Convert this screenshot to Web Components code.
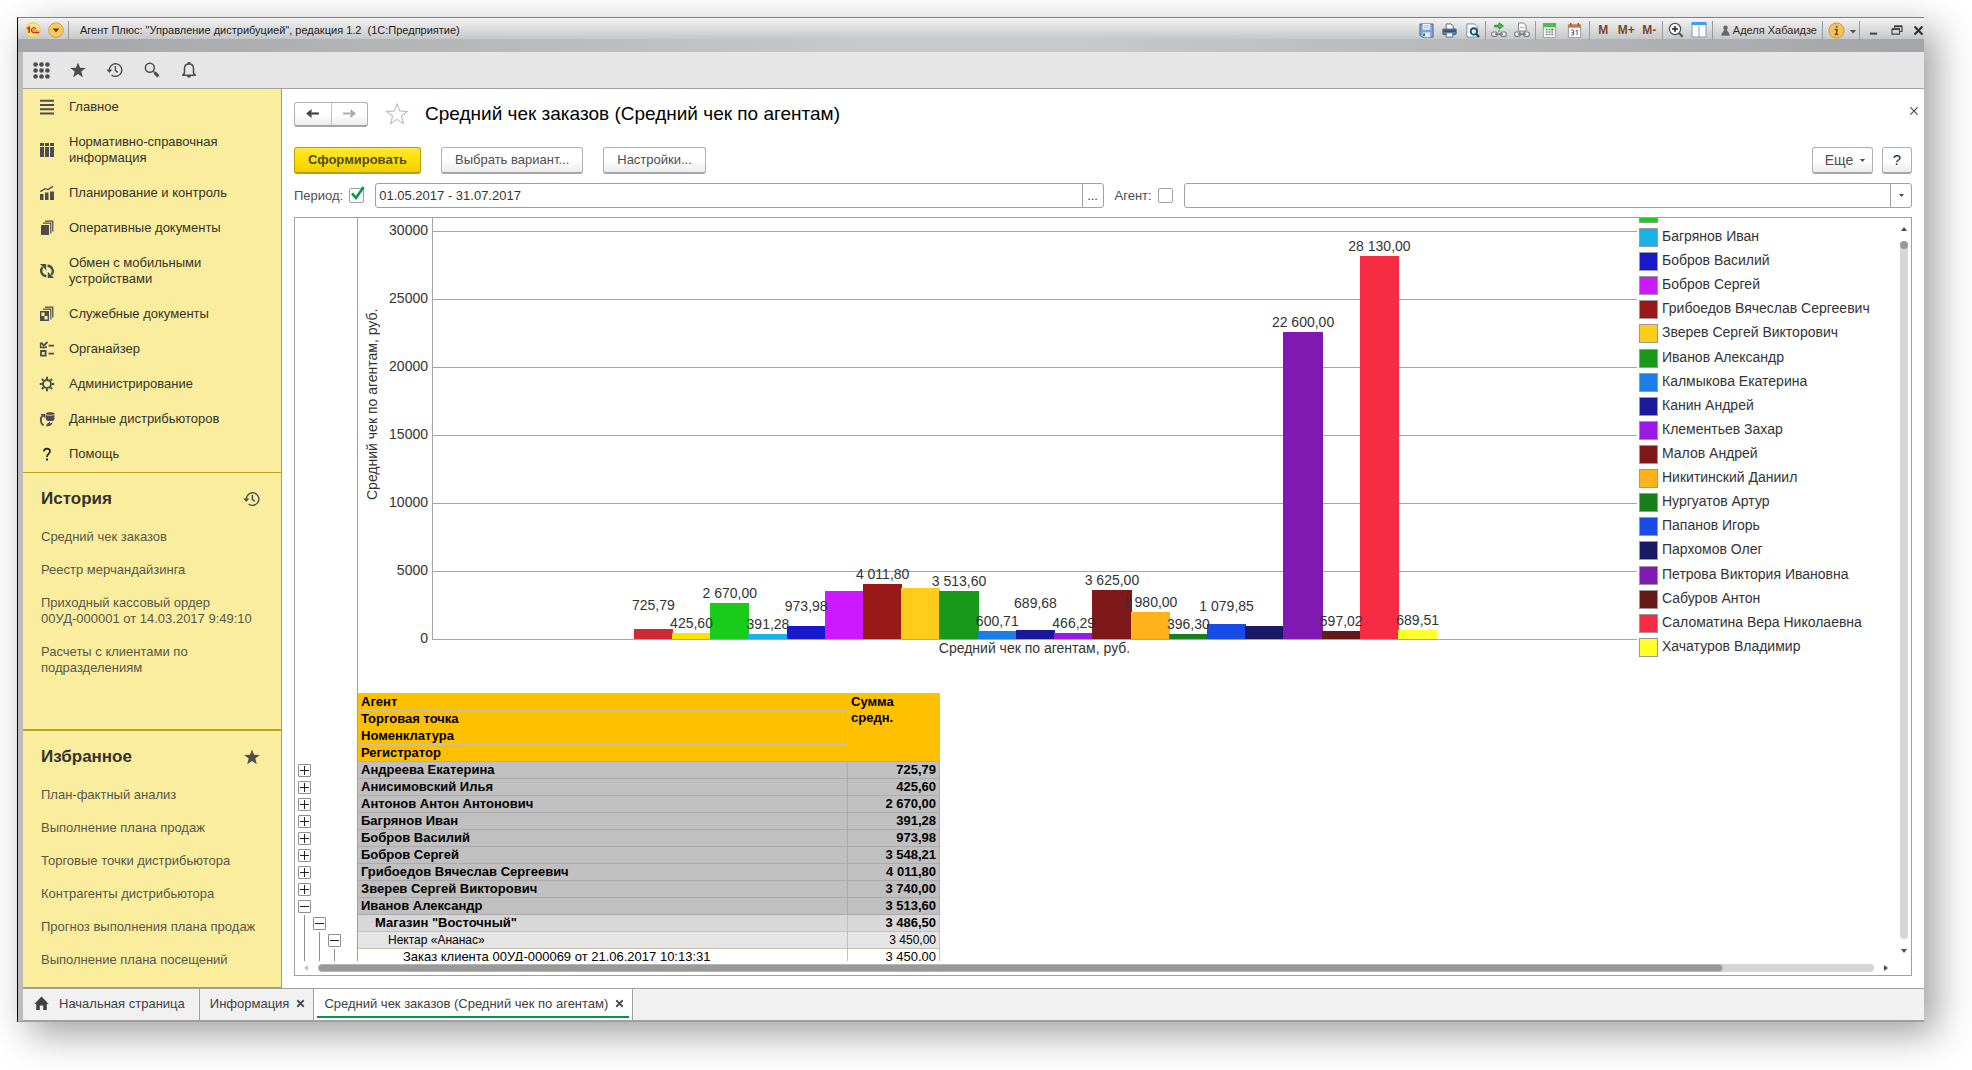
<!DOCTYPE html>
<html lang="ru">
<head>
<meta charset="utf-8">
<title>Агент Плюс: Управление дистрибуцией</title>
<style>
  html, body { height: 100%; margin: 0; }
  body {
    box-sizing: border-box;
    display: flex;
    padding: 17px 48px 48px 17px;
    background: #fff;
    color: #333;
    font: 13px/16px "Liberation Sans", Arial, sans-serif;
    overflow: hidden;
  }
</style>
</head>
<body>
<app-window>
  <title-bar slot="title"></title-bar>
  <tool-strip slot="tools"></tool-strip>
  <side-panel slot="side"></side-panel>
  <report-form slot="main"></report-form>
  <tab-strip slot="tabs"></tab-strip>
</app-window>

<script>
const BASE = `
  :host, *, *::before, *::after { box-sizing: border-box; }
  button, input, select { font: inherit; color: inherit; margin: 0; }
  button { cursor: default; }
  svg { display: block; flex: none; }
`;

function define(name, render, setup) {
  customElements.define(name, class extends HTMLElement {
    constructor() {
      super();
      this.attachShadow({ mode: 'open' });
    }
    connectedCallback() {
      const t = document.createElement('template');
      t.innerHTML = render(this);
      this.shadowRoot.replaceChildren(t.content.cloneNode(true));
      if (setup) setup(this);
    }
  });
}

/* ---------- icons ---------- */
const STAR = 'M10 1.6 12.3 7.4 18.6 7.8 13.7 11.8 15.3 18 10 14.5 4.7 18 6.3 11.8 1.4 7.8 7.7 7.4Z';
const HISTORY = `<g fill="none" stroke="currentColor" stroke-width="1.6"><path d="M3.6 10.2A7 7 0 1 1 6.2 15.5"/><path d="M10.4 5.6V10.4L13 12.6"/></g><path d="M.4 9.4H7L3.7 13.2Z" fill="currentColor"/>`;
const CHAIN = `<rect x=".8" y="10" width="5.4" height="4.4" rx="1.4" fill="#f4f4f4" stroke="#757a80" stroke-width="1.2"/><rect x="9.8" y="10" width="5.4" height="4.4" rx="1.4" fill="#f4f4f4" stroke="#757a80" stroke-width="1.2"/><path d="M4 12.2H12" stroke="#757a80" stroke-width="1.6"/>`;
const ICONS = {
  grid: ['0 0 20 20', [3, 10, 17].map(y => [3, 10, 17].map(x => `<circle cx="${x}" cy="${y}" r="2.7" fill="currentColor"/>`).join('')).join('')],
  star: ['0 0 20 20', `<path fill="currentColor" d="${STAR}"/>`],
  starline: ['0 0 20 20', `<path fill="#fff" stroke="#b4bac0" stroke-width=".9" d="${STAR}"/>`],
  history: ['0 0 20 20', HISTORY],
  search: ['0 0 20 20', `<circle cx="7.6" cy="7.4" r="5" fill="none" stroke="currentColor" stroke-width="1.7"/><path d="M11.4 11.4 13 13" stroke="currentColor" stroke-width="1.5"/><path d="M13 13 17 17" stroke="currentColor" stroke-width="3.6"/>`],
  bell: ['0 0 20 20', `<path d="M3 15.8H17L15 13.4V8.4C15 5 13 3.4 10 3.4S5 5 5 8.4V13.4Z" fill="none" stroke="currentColor" stroke-width="1.7" stroke-linejoin="round"/><path d="M8.6 3.2V1H11.4V3.2ZM7.8 16.6H12.2A2.2 2 0 0 1 7.8 16.6Z" fill="currentColor"/>`],
  menu: ['0 0 16 16', `<path d="M1 1.8H15M1 6H15M1 10.2H15M1 14.4H15" stroke="currentColor" stroke-width="2"/>`],
  table: ['0 0 16 16', `<path fill="currentColor" d="M1 1H5V4H1ZM6 1H10V4H6ZM11 1H15V4H11ZM1 5H5V15H1ZM6 5H10V15H6ZM11 5H15V15H11Z"/>`],
  plan: ['0 0 16 16', `<path fill="currentColor" d="M1 9H4.5V15H1ZM6 7.6H9.5V15H6ZM11 6.4H15V15H11Z"/><path d="M1.4 6.6 6 3.6 9 4.6 14 1.4" fill="none" stroke="currentColor" stroke-width="1.3"/>`],
  docs: ['0 0 16 16', `<path fill="currentColor" d="M2 5H10V15H2Z"/><path d="M4 3.2H11.8V13.4M6 1.2H13.8V11.4" fill="none" stroke="currentColor" stroke-width="1.2"/>`],
  sync: ['0 0 16 16', `<path d="M7.4 13.2A5.4 5.4 0 0 1 3.6 4.2M8.6 2.8A5.4 5.4 0 0 1 12.4 11.8" fill="none" stroke="currentColor" stroke-width="2.4"/><path fill="currentColor" d="M1 1H7.2V7.2ZM15 15H8.8V8.8Z"/>`],
  service: ['0 0 16 16', `<path d="M1.7 5.7H9.3V14.3H1.7Z" fill="none" stroke="currentColor" stroke-width="1.4"/><path fill="currentColor" d="M5.5 6H9V10H5.5ZM2 10H5.5V14H2Z"/><path d="M4 3.2H11.8V13.4M6 1.2H13.8V11.4" fill="none" stroke="currentColor" stroke-width="1.2"/>`],
  organizer: ['0 0 16 16', `<path d="M2 10H6.6V14.6H2Z" fill="none" stroke="currentColor" stroke-width="1.8"/><path d="M1.6 1.4V6.6H7V5" fill="none" stroke="currentColor" stroke-width="1.5"/><path d="M2.4 1.6 4.8 4.6 8.4 1" fill="none" stroke="currentColor" stroke-width="1.8"/><path d="M9.6 4.6H15M9.6 12.6H15" stroke="currentColor" stroke-width="1.9"/>`],
  gear: ['0 0 16 16', `<circle cx="8" cy="8" r="4" fill="none" stroke="currentColor" stroke-width="1.9"/><path d="M8 .8V3.2M8 12.8V15.2M.8 8H3.2M12.8 8H15.2M2.9 2.9 4.6 4.6M11.4 11.4 13.1 13.1M2.9 13.1 4.6 11.4M11.4 4.6 13.1 2.9" stroke="currentColor" stroke-width="2"/>`],
  data: ['0 0 16 16', `<path fill="currentColor" d="M7 2.6C7 .8 15.4.8 15.4 2.6V8.4C15.4 10.4 7 10.4 7 8.4Z"/><path d="M7 3.6C8.4 4.6 14 4.6 15.4 3.6" stroke="#fbed9e" stroke-width=".8" fill="none"/><path d="M4.6 14.4A6.6 6.6 0 0 1 3.4 4.6" fill="none" stroke="currentColor" stroke-width="1.8"/><path fill="currentColor" d="M1.4 3H6.4V7.4ZM7.4 13.4 11 10.4V12.6C12 12.4 13 11.6 13.2 10.8 13.6 13.4 12.4 15 7.4 15.4Z"/>`],
  help: ['0 0 16 16', `<path d="M5 5.4C5 1.8 11 1.8 11 5.2 11 7.6 8 7.8 8 11" fill="none" stroke="#222" stroke-width="1.7"/><path d="M7 12.4H9V14.4H7Z" fill="#222"/>`],
  home: ['0 0 16 16', `<path fill="currentColor" d="M8 .6 15.6 8.6H13.6V15H9.8V10H6.2V15H2.4V8.6H.4Z"/>`],
  close: ['0 0 10 10', `<path d="M1.4 1.4 8.6 8.6M8.6 1.4 1.4 8.6" stroke="currentColor" stroke-width="var(--w,1.2)"/>`],
  down: ['0 0 8 8', `<path fill="currentColor" d="M1 2.4H7L4 5.8Z"/>`],
  left: ['0 0 16 12', `<path d="M15 6H4" stroke="currentColor" stroke-width="2.4"/><path fill="currentColor" d="M1 6 7 1.2V4L5.4 6 7 8V10.8Z"/>`],
  right: ['0 0 16 12', `<path d="M1 6H12" stroke="currentColor" stroke-width="2"/><path fill="currentColor" d="M15 6 9 1.2V4L10.6 6 9 8V10.8Z"/>`],
  logo: ['0 0 18 18', `<circle cx="9" cy="9" r="8.2" fill="#ffe77a" stroke="#e0c565"/><path d="M2.4 7.6 4.6 6V12.4" fill="none" stroke="#d5222a" stroke-width="1.9"/><path d="M12.6 7.6A2.9 2.9 0 1 0 10 12H16" fill="none" stroke="#d5222a" stroke-width="1.3"/><path d="M11.2 8.8A1.2 1.2 0 1 0 10.2 10.2H16" fill="none" stroke="#d5222a" stroke-width=".8"/>`],
  drop: ['0 0 18 18', `<circle cx="9" cy="9" r="8.2" fill="#f9c860" stroke="#c99a4c"/><path d="M5.2 7.2H12.8L9 11.6Z" fill="#5c3d14"/>`],
  save: ['0 0 16 16', `<path d="M1 1H15V15H3L1 13Z" fill="#7fa5d3" stroke="#48689a"/><path d="M4 1H12V7H4Z" fill="#f7fafd"/><path d="M5 3H11M5 5H11" stroke="#9cb3cf"/><path d="M4 10H12V15H4Z" fill="#e4ecf5"/><path d="M5.5 11V14" stroke="#48689a" stroke-width="2"/>`],
  print: ['0 0 16 16', `<path d="M4.5 7V1H9.5L12 3.4V7" fill="#fff" stroke="#4a6688"/><path d="M1 6.5H15V12H1Z" fill="#6a88a8" stroke="#344f6d"/><path d="M1.5 8.6H14.5" stroke="#2c4460" stroke-width="1.6"/><path d="M4.5 10.5H11.5V15H4.5Z" fill="#fff" stroke="#4a6688"/>`],
  preview: ['0 0 16 16', `<path d="M2 1H10L13 4V15H2Z" fill="#fff" stroke="#6d8aa8"/><circle cx="9.4" cy="9" r="3.4" fill="#e9f6fb" stroke="#0f5078" stroke-width="2"/><path d="M12 11.6 15 15" stroke="#0f5078" stroke-width="2.4"/>`],
  link: ['0 0 16 16', `<path d="M3.6 3.2H8V.8L12.4 4 8 7.2V5H3.6Z" fill="#39d02c" stroke="#197219" stroke-width=".7"/><path d="M8 8V10" stroke="#757a80"/>${CHAIN}`],
  print2: ['0 0 16 16', `<path d="M4.5 9V1H9.5L12 3.4V9Z" fill="#fff" stroke="#7b8288"/><path d="M6 5.6H10.4" stroke="#a7adb3"/>${CHAIN}`],
  calc: ['0 0 16 16', `<path d="M1.5 1H14.5V15.5H1.5Z" fill="#f7f7f7" stroke="#9aa09a"/><path d="M1 0H15V4.6H1Z" fill="#45c24b"/><path d="M4 7H12M4 9.6H12M4 12.2H12" stroke="#7b8a84" stroke-width="1.6" stroke-dasharray="2 1"/><path d="M10 7H12" stroke="#e33" stroke-width="1.6"/>`],
  cal: ['0 0 16 16', `<path d="M1.5 3H14.5V15.5H1.5Z" fill="#fff" stroke="#8d99a8"/><path d="M1 1.4H15V5H1Z" fill="#c47a4a"/><path d="M4 0V3M12 0V3" stroke="#8d4b22" stroke-width="1.4"/><path d="M4.4 7.6H7V12.8H4.4M5 10.2H7M9.2 8.6 10.8 7.6V13" fill="none" stroke="#4b5563"/>`],
  zoom: ['0 0 16 16', `<circle cx="7" cy="7" r="5.6" fill="#fff" stroke="#555" stroke-width="1.3"/><path d="M4 7H10M7 4V10" stroke="#222" stroke-width="1.5"/><path d="M11.2 11.2 14.6 14.8" stroke="#6b5136" stroke-width="2.2"/>`],
  panel: ['0 0 16 16', `<path d="M1 1.5H15V15H1Z" fill="#fff" stroke="#8199b3"/><path d="M.5 0H15.5V3H.5Z" fill="#3f9fee"/><path d="M8 4V15" stroke="#8199b3"/>`],
  person: ['0 0 10 12', `<circle cx="5" cy="3" r="2.5" fill="#666"/><path d="M.8 11.4C.8 8.6 3 7.4 3.6 5.6H6.4C7 7.4 9.2 8.6 9.2 11.4Z" fill="#666" stroke="#444" stroke-width=".5"/>`],
  info: ['0 0 18 18', `<circle cx="9" cy="9" r="8" fill="#f6c259" stroke="#c79335"/><path d="M9.2 4V6M7 8H9.6L8.8 13H7M8.4 13H10.8" stroke="#7c5a20" stroke-width="1.8" fill="none"/>`],
  more: ['0 0 10 10', `<path d="M1 5H9L5 9.4Z" fill="#555"/>`],
  min: ['0 0 12 12', `<path d="M2 9.4H10" stroke="#444" stroke-width="2.2"/>`],
  restore: ['0 0 14 12', `<path d="M4 3.4V1.2H13V7.8H10.6M1 4.8H10V11H1Z" fill="none" stroke="#444" stroke-width="1.4"/><path d="M4 1.6H13M1 5H10" stroke="#444" stroke-width="2"/>`],
};
define('ui-icon', el => {
  const [box, body] = ICONS[el.getAttribute('name')];
  const [, , w, h] = box.split(' ').map(Number);
  const width = Number(el.getAttribute('size') || w);
  return `<style>${BASE} :host{display:inline-flex;flex:none}</style>
  <svg width="${width}" height="${Math.round(width * h / w)}" viewBox="${box}" aria-hidden="true">${body}</svg>`;
});

/* ---------- window frame ---------- */
define('app-window', () => `<style>${BASE}
  :host { flex: 1; min-width: 0; display: flex; flex-direction: column; background: #fff;
    border-left: 1px solid #000; border-top: 1px solid #808080;
    box-shadow: 12px 12px 36px rgba(0,0,0,.38); }
  .frame { flex: 1; min-height: 0; display: flex; flex-direction: column;
    border-left: 5px solid #bcbcbc; border-bottom: 2px solid #a0a0a0; }
  .work { flex: 1; min-height: 0; display: flex; }
</style>
<slot name="title"></slot>
<div class="frame">
  <slot name="tools"></slot>
  <div class="work"><slot name="side"></slot><slot name="main"></slot></div>
  <slot name="tabs"></slot>
</div>`);

define('title-bar', () => `<style>${BASE}
  :host { display: block; height: 34px; flex: none; color: #222;
    background: linear-gradient(#f3f3f3, #c6c7c8 21px, transparent 21px),
      linear-gradient(90deg, #a3a5a8, #c8c9ca 45%, #c8c9ca 55%, #a3a5a8); }
  header { display: flex; align-items: center; height: 24px; padding-left: 3px; }
  h1 { font-size: 11px; font-weight: 400; margin: 0 0 0 9px; white-space: pre; }
  .left, .right { display: flex; align-items: center; }
  .right { margin-left: auto; }
  button { display: flex; align-items: center; justify-content: center; border: 0; padding: 0;
    background: none; height: 20px; width: 23px; }
  button.m { color: #7a4a28; font-weight: 700; font-size: 12px; }
  button.big { width: 27px; }
  button.small { width: 10px; }
  .close { --w: 2; width: 20px; margin-right: -4px; color: #333; }
  i { width: 1px; height: 19px; background: #9b9b9b; margin: 0 2px 0 1px; }
  .user { display: flex; align-items: center; gap: 3px; font-size: 11px; padding: 0 4px 0 6px; color: #3a2a16; }
</style>
<header>
  <div class="left">
    <button aria-label="1С"><ui-icon name="logo" size="16"></ui-icon></button>
    <button aria-label="Меню"><ui-icon name="drop" size="16"></ui-icon></button><i></i>
  </div>
  <h1>Агент Плюс: "Управление дистрибуцией", редакция 1.2  (1С:Предприятие)</h1>
  <div class="right">
    <button aria-label="Сохранить"><ui-icon name="save" size="15"></ui-icon></button>
    <button aria-label="Печать"><ui-icon name="print" size="15"></ui-icon></button>
    <button aria-label="Просмотр"><ui-icon name="preview" size="15"></ui-icon></button><i></i>
    <button aria-label="Получить ссылку"><ui-icon name="link" size="16"></ui-icon></button>
    <button aria-label="Перейти по ссылке"><ui-icon name="print2" size="16"></ui-icon></button><i></i>
    <button aria-label="Калькулятор"><ui-icon name="calc" size="15"></ui-icon></button>
    <button class="big" aria-label="Календарь"><ui-icon name="cal" size="15"></ui-icon></button><i></i>
    <button class="m">M</button><button class="m">M+</button><button class="m">M-</button><i></i>
    <button aria-label="Масштаб"><ui-icon name="zoom" size="16"></ui-icon></button>
    <button aria-label="Панели"><ui-icon name="panel" size="16"></ui-icon></button><i></i>
    <span class="user"><ui-icon name="person" size="9"></ui-icon>Аделя Хабаидзе</span><i></i>
    <button aria-label="Информация"><ui-icon name="info" size="17"></ui-icon></button>
    <button class="small" aria-label="Еще"><ui-icon name="more" size="8"></ui-icon></button><i></i>
    <button aria-label="Свернуть"><ui-icon name="min" size="11"></ui-icon></button>
    <button aria-label="Развернуть"><ui-icon name="restore" size="12"></ui-icon></button>
    <button class="close" aria-label="Закрыть"><ui-icon name="close" size="11"></ui-icon></button>
  </div>
</header>`);

define('tool-strip', () => `<style>${BASE}
  :host { display: flex; align-items: center; gap: 17px; height: 37px; flex: none; padding-left: 8px;
    background: #e6e6e6; border-bottom: 1px solid #a0a0a0; color: #4d4d4d; }
  button { width: 20px; height: 20px; padding: 0; border: 0; background: none; display: flex; align-items: center; justify-content: center; }
</style>
<button aria-label="Меню функций"><ui-icon name="grid" size="17"></ui-icon></button>
<button aria-label="Избранное"><ui-icon name="star" size="18"></ui-icon></button>
<button aria-label="История"><ui-icon name="history" size="18"></ui-icon></button>
<button aria-label="Поиск"><ui-icon name="search" size="18"></ui-icon></button>
<button aria-label="Оповещения"><ui-icon name="bell" size="18"></ui-icon></button>`);

/* ---------- sidebar ---------- */
define('nav-link', el => `<style>${BASE}
  :host { display: block; }
  a { display: flex; align-items: center; gap: 14px; min-height: 35px; padding: 9px 40px 10px 16px;
    color: #33332b; text-decoration: none; }
  ui-icon { color: #4d4d4d; }
</style><a href="#"><ui-icon name="${el.getAttribute('icon')}" size="16"></ui-icon><span><slot></slot></span></a>`);

define('side-section', el => `<style>${BASE}
  :host { display: block; flex: 1; min-height: 0; padding: 15px 20px 0 18px; border-bottom: 2px solid #baa41a; }
  header { display: flex; align-items: center; justify-content: space-between; height: 22px; margin-bottom: 11px; color: #4d4d4d; }
  h2 { margin: 0; font-size: 17px; line-height: 20px; color: #33332b; }
</style>
<header><h2>${el.getAttribute('heading')}</h2><ui-icon name="${el.getAttribute('icon')}" size="18"></ui-icon></header>
<nav><slot></slot></nav>`);

define('side-link', () => `<style>${BASE}
  :host { display: block; }
  a { display: block; padding: 8px 0 9px; color: #57574b; text-decoration: none; }
</style><a href="#"><slot></slot></a>`);

define('side-panel', () => {
  const nav = [['menu', 'Главное'], ['table', 'Нормативно-справочная информация'], ['plan', 'Планирование и контроль'],
    ['docs', 'Оперативные документы'], ['sync', 'Обмен с мобильными устройствами'], ['service', 'Служебные документы'],
    ['organizer', 'Органайзер'], ['gear', 'Администрирование'], ['data', 'Данные дистрибьюторов'], ['help', 'Помощь']];
  const hist = ['Средний чек заказов', 'Реестр мерчандайзинга', 'Приходный кассовый ордер 00УД-000001 от 14.03.2017 9:49:10', 'Расчеты с клиентами по подразделениям'];
  const fav = ['План-фактный анализ', 'Выполнение плана продаж', 'Торговые точки дистрибьютора', 'Контрагенты дистрибьютора', 'Прогноз выполнения плана продаж', 'Выполнение плана посещений'];
  const links = a => a.map(t => `<side-link>${t}</side-link>`).join('');
  return `<style>${BASE}
  :host { display: flex; flex-direction: column; width: 259px; flex: none; background: #fbed9e; border-right: 1px solid #baa41a; }
  .nav { padding-top: 1px; border-bottom: 1px solid #baa41a; }
  side-section:last-child { border-bottom-width: 1px; }
</style>
<nav class="nav">${nav.map(([i, t]) => `<nav-link icon="${i}">${t}</nav-link>`).join('')}</nav>
<side-section heading="История" icon="history">${links(hist)}</side-section>
<side-section heading="Избранное" icon="star">${links(fav)}</side-section>`;
});

/* ---------- tabs ---------- */
define('tab-item', el => `<style>${BASE}
  :host { display: flex; align-items: stretch; border-right: 1px solid #a0a0a0; padding: 0 3px 2px; color: #404040; }
  :host([active]) { background: #fff; }
  .in { display: flex; align-items: center; gap: 7px; padding: 2px 5px 0 7px; border-bottom: 2px solid transparent; }
  :host([active]) .in { border-bottom-color: #009646; }
  button { --w: 2; border: 0; padding: 0; background: none; display: flex; color: #4d4d4d; }
  .home { gap: 10px; padding: 2px 11px 0 8px; }
  a { color: inherit; text-decoration: none; white-space: nowrap; }
</style>
<div class="in ${el.hasAttribute('home') ? 'home' : ''}">${el.hasAttribute('home') ? '<ui-icon name="home" size="15"></ui-icon>' : ''}
<a href="#"><slot></slot></a>
${el.hasAttribute('home') ? '' : '<button aria-label="Закрыть вкладку"><ui-icon name="close" size="9"></ui-icon></button>'}</div>`);

define('tab-strip', () => `<style>${BASE}
  :host { display: flex; height: 32px; flex: none; background: #f1f1f1; border-top: 1px solid #a0a0a0; }
</style>
<tab-item home>Начальная страница</tab-item><tab-item>Информация</tab-item><tab-item active>Средний чек заказов (Средний чек по агентам)</tab-item>`);

/* ---------- form ---------- */
define('ui-button', el => `<style>${BASE}
  :host { display: inline-flex; }
  button { display: flex; align-items: center; justify-content: center; gap: 6px; height: 27px; padding: 0 13px;
    border: 1px solid #b0b0b0; border-bottom: 2px solid #a6a6a6; border-radius: 3px;
    background: linear-gradient(#fff 50%, #ececec); color: #4d4d4d; white-space: nowrap; }
  :host([primary]) button { background: linear-gradient(#ffe83a, #ffdf00 50%, #f2cf00); border-color: #b8a000; color: #4d4d33; font-weight: 700; }
  :host([square]) button { width: 30px; padding: 0; font-size: 15px; color: #222; }
  :host([menu]) button { width: 61px; padding: 0 2px 0 8px; font-size: 14px; }
</style><button><slot></slot>${el.hasAttribute('menu') ? '<ui-icon name="down" size="7"></ui-icon>' : ''}</button>`);

define('report-form', () => `<style>${BASE}
  :host { flex: 1; min-width: 0; display: flex; flex-direction: column; padding: 12px; background: #fff; }
  .head { display: flex; align-items: center; height: 26px; }
  .history { display: flex; border: 1px solid #b0b0b0; border-bottom: 2px solid #a6a6a6; border-radius: 3px; background: linear-gradient(#fff 50%, #ececec); height: 25px; width: 74px; }
  .history button { flex: 1; display: flex; align-items: center; justify-content: center; border: 0; background: none; padding: 0; color: #444; }
  .history button + button { border-left: 1px solid #c4c4c4; color: #a8a8a8; }
  .head ui-icon.star { margin: 0 16px 0 17px; }
  h1 { font-size: 19px; line-height: 22px; font-weight: 400; margin: 0; color: #000; }
  .x { margin: 0 -7px 6px auto; border: 0; background: none; padding: 0; display: flex; color: #4d4d4d; }
  .bar { display: flex; margin-top: 20px; gap: 20px; }
  .bar .end { margin-left: auto; display: flex; gap: 9px; }
  .filters { display: flex; align-items: center; gap: 11px; margin: 9px 0; color: #4d4d4d; }
  label { position: relative; display: flex; align-items: center; gap: 6px; }
  input[type=checkbox] { appearance: none; width: 15px; height: 15px; border: 1px solid #a0a0a0; border-radius: 2px; background: #fff; }
  .tick { position: absolute; right: -2px; top: -3px; pointer-events: none; }
  .field { flex: 1; min-width: 0; display: flex; height: 25px; border: 1px solid #a0a0a0; border-radius: 3px; color: #333; background: #fff; }
  .field input, .field select { flex: 1; min-width: 0; border: 0; padding: 0 3px; background: none; outline: 0; }
  .field button, .field .arrow { width: 21px; border: 0; border-left: 1px solid #a0a0a0; padding: 0; background: none; display: flex; align-items: center; justify-content: center; }
  .combo { display: grid; }
  .combo > * { grid-area: 1 / 1; }
  .combo select { appearance: none; }
  .combo .arrow { justify-self: end; pointer-events: none; color: #4d4d4d; }
  report-view { flex: 1; min-height: 0; }
</style>
<div class="head">
  <div class="history"><button aria-label="Назад"><ui-icon name="left" size="15"></ui-icon></button><button aria-label="Вперед"><ui-icon name="right" size="15"></ui-icon></button></div>
  <ui-icon class="star" name="starline" size="24"></ui-icon>
  <h1>Средний чек заказов (Средний чек по агентам)</h1>
  <button class="x" aria-label="Закрыть"><ui-icon name="close" size="10"></ui-icon></button>
</div>
<div class="bar">
  <ui-button primary>Сформировать</ui-button>
  <ui-button>Выбрать вариант...</ui-button>
  <ui-button>Настройки...</ui-button>
  <div class="end"><ui-button menu>Еще</ui-button><ui-button square>?</ui-button></div>
</div>
<div class="filters">
  <label>Период:<input type="checkbox" checked><svg class="tick" width="17" height="17" viewBox="0 0 17 17"><path d="M3 8.4 7 13 14.6 2" fill="none" stroke="#00994d" stroke-width="2.6"/></svg></label>
  <div class="field"><input type="text" value="01.05.2017 - 31.07.2017" aria-label="Период"><button aria-label="Выбрать период">...</button></div>
  <label>Агент:<input type="checkbox"></label>
  <div class="field combo"><select aria-label="Агент"><option></option></select><span class="arrow"><ui-icon name="down" size="7"></ui-icon></span></div>
</div>
<report-view></report-view>`);

/* ---------- report ---------- */
const AGENTS = [
  ['Андреева Екатерина', 725.79, '#ce2934', '725,79', 14], ['Анисимовский Илья', 425.6, '#ffe100', '425,60'],
  ['Антонов Антон Антонович', 2670, '#1acc1a', '2 670,00'], ['Багрянов Иван', 391.28, '#1ab2e6', '391,28'],
  ['Бобров Василий', 973.98, '#1919cc', '973,98', 10], ['Бобров Сергей', 3548.21, '#cc19ff', ''],
  ['Грибоедов Вячеслав Сергеевич', 4011.8, '#991919', '4 011,80'], ['Зверев Сергей Викторович', 3740, '#ffcc19', ''],
  ['Иванов Александр', 3513.6, '#19991a', '3 513,60'], ['Калмыкова Екатерина', 600.71, '#197fe6', '600,71'],
  ['Канин Андрей', 689.68, '#191999', '689,68', 17], ['Клементьев Захар', 466.29, '#9919e6', '466,29'],
  ['Малов Андрей', 3625, '#7f1919', '3 625,00'], ['Никитинский Даниил', 1980, '#ffb219', '1 980,00'],
  ['Нургуатов Артур', 396.3, '#197f19', '396,30'], ['Папанов Игорь', 1079.85, '#194ce6', '1 079,85', 8],
  ['Пархомов Олег', 960, '#191966', ''], ['Петрова Виктория Ивановна', 22600, '#7f19b2', '22 600,00'],
  ['Сабуров Антон', 597.02, '#661919', '597,02'], ['Саломатина Вера Николаевна', 28130, '#f72c43', '28 130,00'],
  ['Хачатуров Владимир', 689.51, '#ffff2b', '689,51'],
];
const MAX = 30000;

define('report-chart', () => `<style>${BASE}
  :host { display: grid; grid-template-columns: 28px 42px 1fr 261px; height: 475px; font-size: 14px; }
  .ytitle { writing-mode: vertical-rl; transform: rotate(180deg); white-space: nowrap; line-height: 28px; justify-self: start; height: 373px; text-align: center; }
  .scale { display: flex; flex-direction: column; justify-content: space-between; text-align: right; height: 428px; padding-top: 4px; }
  .plotcol { display: flex; flex-direction: column; margin-left: 4px; }
  .plot { display: grid; border-left: 1px solid #a6a6a6; padding-top: 13px; height: 422px; }
  .plot > * { grid-area: 1 / 1; }
  .lines { display: flex; flex-direction: column; }
  .lines div { height: 68px; border-top: 1px solid #a6a6a6; }
  .lines div:last-child { height: 1px; }
  .bars { display: flex; align-items: flex-end; width: 66.66%; height: 408px; margin: 0 auto; }
  .bar { flex: 1; position: relative; margin-right: -1px; }
  .bar span { position: absolute; bottom: 100%; left: 50%; translate: -50% 0; white-space: nowrap; padding-bottom: 2px; z-index: 1; line-height: 16px; }
  .xtitle { text-align: center; }
  .legend { display: flex; flex-direction: column; padding-left: 2px; }
  .part { width: 19px; height: 5px; background: #1acc1a; border: 1px solid #999; border-top: 0; margin-bottom: 5px; flex: none; }
  ul { list-style: none; margin: 0; padding: 0; height: 429px; display: flex; flex-direction: column; justify-content: space-between; }
  li { display: flex; gap: 4px; line-height: 16px; height: 19px; white-space: nowrap; }
  li i { width: 19px; height: 19px; border: 1px solid #999; flex: none; }
</style>
<div class="ytitle">Средний чек по агентам, руб.</div>
<div class="scale">${[30000, 25000, 20000, 15000, 10000, 5000, 0].map(v => `<span>${v}</span>`).join('')}</div>
<div class="plotcol">
  <div class="plot">
    <div class="lines">${'<div></div>'.repeat(7)}</div>
    <div class="bars">${AGENTS.map(([, v, c, t, lift]) =>
      `<div class="bar" style="height:${(v / MAX * 100).toFixed(3)}%;background:${c}">${t ? `<span${lift ? ` style="padding-bottom:${lift + 2}px"` : ''}>${t}</span>` : ''}</div>`).join('')}</div>
  </div>
  <div class="xtitle">Средний чек по агентам, руб.</div>
</div>
<div class="legend"><div class="part"></div><ul>${AGENTS.slice(3).map(([n, , c]) => `<li><i style="background:${c}"></i>${n}</li>`).join('')}</ul></div>`);

define('report-table', () => {
  const rows = AGENTS.slice(0, 9).map(([n, , , t], i) => ['a', n, i === 5 ? '3 548,21' : i === 7 ? '3 740,00' : t]);
  rows.push(['b', 'Магазин "Восточный"', '3 486,50'], ['c', 'Нектар «Ананас»', '3 450,00'], ['d', 'Заказ клиента 00УД-000069 от 21.06.2017 10:13:31', '3 450,00']);
  return `<style>${BASE}
  :host { display: block; color: #000; }
  table { border-spacing: 0; table-layout: fixed; width: 582px; }
  th, td { height: 17px; padding: 0 3px; border: 0 solid #acacac; border-width: 0 1px 1px 0; line-height: 16px; text-align: left; white-space: nowrap; }
  th { background: #ffc000; border-color: #c8c0a8; }
  thead tr:first-child th { border-top-width: 1px; height: 18px; }
  thead tr:last-child th, .sum { border-bottom-color: #acacac; }
  .sum { vertical-align: top; white-space: normal; padding-right: 20px; }
  td + td { text-align: right; }
  .a td, .b td { font-weight: 700; }
  .a td { background: #c0c0c0; }
  .b td, .c td, .d td { border-color: #c9c0a6; }
  .b td { background: #d8d8d8; } .c td { background: #e5e5e5; }
  .c { font-size: 12px; }
  .b td:first-child { padding-left: 17px; } .c td:first-child { padding-left: 30px; } .d td:first-child { padding-left: 45px; }
</style>
<table><colgroup><col><col style="width:92px"></colgroup>
<thead><tr><th>Агент</th><th class="sum" rowspan="4">Сумма средн.</th></tr><tr><th>Торговая точка</th></tr><tr><th>Номенклатура</th></tr><tr><th>Регистратор</th></tr></thead>
<tbody>${rows.map(([c, n, v]) => `<tr class="${c}"><td>${n}</td><td>${v}</td></tr>`).join('')}</tbody></table>`;
});

define('report-outline', () => {
  const btn = open => `<button aria-label="${open ? 'Свернуть' : 'Развернуть'}"><svg width="11" height="11" viewBox="0 0 11 11"><path d="M1 5.5H10${open ? '' : 'M5.5 1V10'}" stroke="#222"/></svg></button>`;
  let h = '';
  for (let i = 0; i < 8; i++) h += `<div>${btn(false)}</div>`;
  h += `<div>${btn(true)}</div><div><i></i>${btn(true)}</div><div><i></i><i></i>${btn(true)}</div><div><i></i><i></i><i></i></div>`;
  return `<style>${BASE}
  :host { display: block; width: 63px; flex: none; border-right: 1px solid #a0a0a0; padding: 544px 0 0 3px; }
  div { display: flex; align-items: center; height: 17px; gap: 2px; }
  button { width: 13px; height: 13px; border: 1px solid #909090; border-radius: 1px; background: #fff; padding: 0; display: flex; }
  i { width: 13px; align-self: stretch; display: flex; justify-content: center; }
  i::before { content: ""; width: 1px; background: #909090; }
</style>${h}`;
});

define('report-view', () => `<style>${BASE}
  :host { display: grid; grid-template: minmax(0, 1fr) 14px / minmax(0, 1fr) 13px; border: 1px solid #a0a0a0; background: #fff; }
  .page { display: flex; overflow: hidden; }
  .sheet { flex: 1; min-width: 0; }
  .v, .h { display: flex; align-items: center; color: #4d4d4d; }
  .v { flex-direction: column; padding: 7px 1px 6px 0; }
  .h { padding: 0 8px 0 7px; }
  .track { flex: 1; background: #d6d6d6; border-radius: 4px; }
  .v .track { width: 8px; margin: 8px 0; }
  .h .track { height: 8px; margin: 0 8px; }
  .v .thumb { height: 8px; border-radius: 4px; background: #999; }
  .h .thumb { width: 90.3%; height: 8px; border-radius: 4px; background: #999; border: 1px solid #b4b4b4; }
  .off { color: #c0c0c0; }
</style>
<div class="page"><report-outline></report-outline><div class="sheet"><report-chart></report-chart><report-table></report-table></div></div>
<div class="v">
  <svg width="8" height="8" viewBox="0 0 8 8"><path d="M1 6H7L4 2Z" fill="currentColor"/></svg>
  <div class="track"><div class="thumb"></div></div>
  <svg width="8" height="8" viewBox="0 0 8 8"><path d="M1 2H7L4 6Z" fill="currentColor"/></svg>
</div>
<div class="h">
  <svg class="off" width="8" height="8" viewBox="0 0 8 8"><path d="M6 1V7L2 4Z" fill="currentColor"/></svg>
  <div class="track"><div class="thumb"></div></div>
  <svg width="8" height="8" viewBox="0 0 8 8"><path d="M2 1V7L6 4Z" fill="currentColor"/></svg>
</div>`);
</script>
</body>
</html>
